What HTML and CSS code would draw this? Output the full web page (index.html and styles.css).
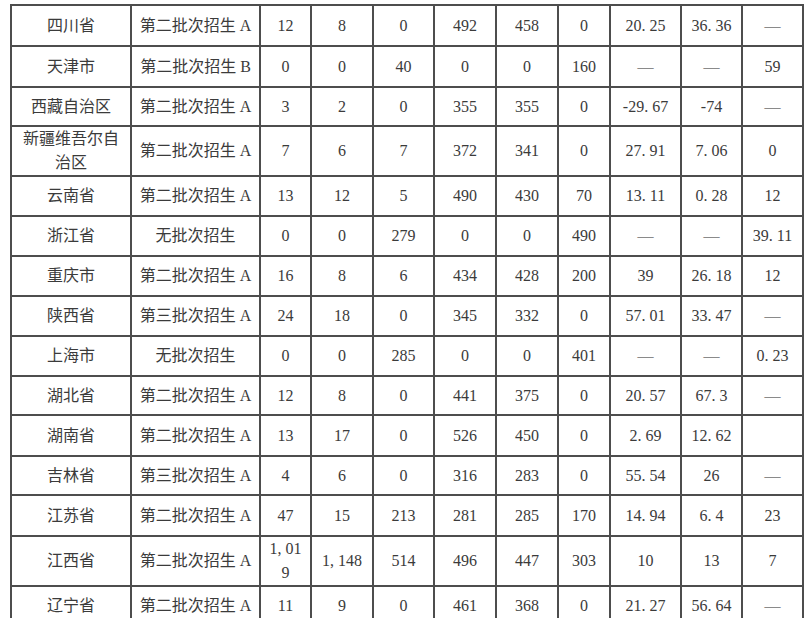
FILE: index.html
```html
<!DOCTYPE html>
<html lang="zh">
<head>
<meta charset="utf-8">
<link rel="stylesheet" href="styles.css">
</head>
<body>
<div class="sheet">
<table class="grid">
<colgroup>
<col class="c-prov"><col class="c-batch"><col class="c-n1"><col class="c-n2"><col class="c-n3"><col class="c-n4"><col class="c-n5"><col class="c-n6"><col class="c-n7"><col class="c-n8"><col class="c-n9">
</colgroup>
<tbody>
<tr class="r41"><td>四川省</td><td>第二批次招生 A</td><td>12</td><td>8</td><td>0</td><td>492</td><td>458</td><td>0</td><td>20. 25</td><td>36. 36</td><td class="dash">—</td></tr>
<tr class="r41"><td>天津市</td><td>第二批次招生 B</td><td>0</td><td>0</td><td>40</td><td>0</td><td>0</td><td>160</td><td class="dash">—</td><td class="dash">—</td><td>59</td></tr>
<tr class="r39"><td>西藏自治区</td><td>第二批次招生 A</td><td>3</td><td>2</td><td>0</td><td>355</td><td>355</td><td>0</td><td>-29. 67</td><td>-74</td><td class="dash">—</td></tr>
<tr class="tall"><td class="wrap">新疆维吾尔自治区</td><td>第二批次招生 A</td><td>7</td><td>6</td><td>7</td><td>372</td><td>341</td><td>0</td><td>27. 91</td><td>7. 06</td><td>0</td></tr>
<tr><td>云南省</td><td>第二批次招生 A</td><td>13</td><td>12</td><td>5</td><td>490</td><td>430</td><td>70</td><td>13. 11</td><td>0. 28</td><td>12</td></tr>
<tr><td>浙江省</td><td>无批次招生</td><td>0</td><td>0</td><td>279</td><td>0</td><td>0</td><td>490</td><td class="dash">—</td><td class="dash">—</td><td>39. 11</td></tr>
<tr><td>重庆市</td><td>第二批次招生 A</td><td>16</td><td>8</td><td>6</td><td>434</td><td>428</td><td>200</td><td>39</td><td>26. 18</td><td>12</td></tr>
<tr><td>陕西省</td><td>第三批次招生 A</td><td>24</td><td>18</td><td>0</td><td>345</td><td>332</td><td>0</td><td>57. 01</td><td>33. 47</td><td class="dash">—</td></tr>
<tr><td>上海市</td><td>无批次招生</td><td>0</td><td>0</td><td>285</td><td>0</td><td>0</td><td>401</td><td class="dash">—</td><td class="dash">—</td><td>0. 23</td></tr>
<tr class="r39"><td>湖北省</td><td>第二批次招生 A</td><td>12</td><td>8</td><td>0</td><td>441</td><td>375</td><td>0</td><td>20. 57</td><td>67. 3</td><td class="dash">—</td></tr>
<tr class="r41"><td>湖南省</td><td>第二批次招生 A</td><td>13</td><td>17</td><td>0</td><td>526</td><td>450</td><td>0</td><td>2. 69</td><td>12. 62</td><td></td></tr>
<tr class="r39"><td>吉林省</td><td>第三批次招生 A</td><td>4</td><td>6</td><td>0</td><td>316</td><td>283</td><td>0</td><td>55. 54</td><td>26</td><td class="dash">—</td></tr>
<tr class="r41"><td>江苏省</td><td>第二批次招生 A</td><td>47</td><td>15</td><td>213</td><td>281</td><td>285</td><td>170</td><td>14. 94</td><td>6. 4</td><td>23</td></tr>
<tr class="tall49"><td>江西省</td><td>第二批次招生 A</td><td>1, 01<br>9</td><td>1, 148</td><td>514</td><td>496</td><td>447</td><td>303</td><td>10</td><td>13</td><td>7</td></tr>
<tr><td>辽宁省</td><td>第二批次招生 A</td><td>11</td><td>9</td><td>0</td><td>461</td><td>368</td><td>0</td><td>21. 27</td><td>56. 64</td><td class="dash">—</td></tr>
</tbody>
</table>
</div>
</body>
</html>
```
FILE: styles.css
```css
html, body {
  margin: 0;
  padding: 0;
  background: #ffffff;
}

.sheet {
  height: 618px;
  overflow: hidden;
  padding: 4px 0 0 10px;
  box-sizing: border-box;
}

.grid {
  border-collapse: collapse;
  table-layout: fixed;
  width: 794px;
  font-family: "Liberation Serif", "Noto Sans CJK SC", serif;
  font-size: 16px;
  color: #3b3b3b;
}

.c-prov { width: 120px; }
.c-batch { width: 129px; }
.c-n1 { width: 51px; }
.c-n2 { width: 62px; }
.c-n3 { width: 61px; }
.c-n4 { width: 62px; }
.c-n5 { width: 62px; }
.c-n6 { width: 52px; }
.c-n7 { width: 71px; }
.c-n8 { width: 61px; }
.c-n9 { width: 61px; }

.grid tr {
  height: 40px;
}

.grid tr.r41 {
  height: 41px;
}

.grid tr.r39 {
  height: 39px;
}

.grid tr.tall {
  height: 50px;
}

.grid tr.tall49 {
  height: 49px;
}

.grid td {
  border: 2px solid #4d4d4d;
  text-align: center;
  vertical-align: middle;
  line-height: 24px;
  padding: 0 4px;
  white-space: nowrap;
  overflow: hidden;
}

.grid td.wrap {
  white-space: normal;
  padding: 0 5px;
}

.grid td.dash {
  color: #8a8a8a;
}
```
